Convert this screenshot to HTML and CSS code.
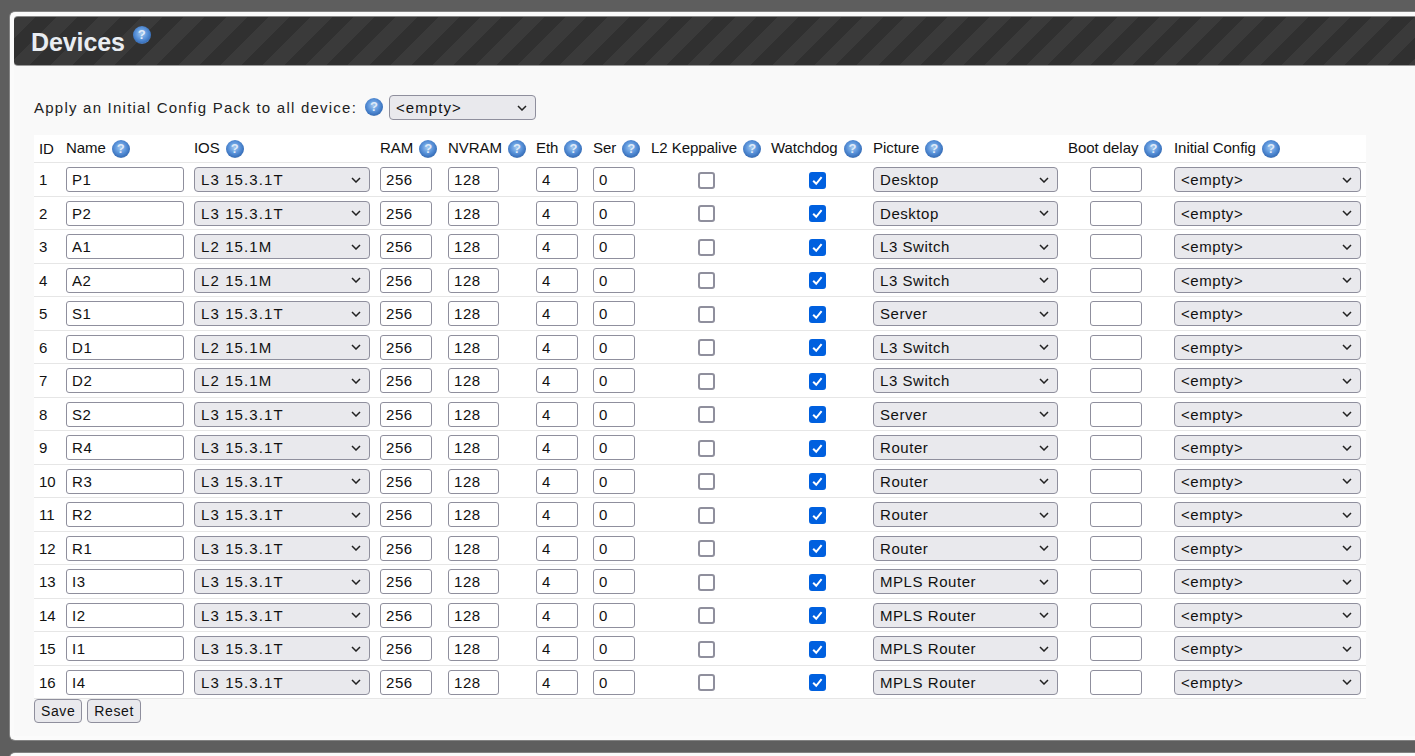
FILE: index.html
```html
<!DOCTYPE html>
<html lang="en">
<head>
<meta charset="utf-8">
<title>Devices</title>
<link rel="stylesheet" href="styles.css">
</head>
<body>
<section class="card">
  <header class="card-head"><h1>Devices</h1><span class="help help-title">?</span></header>
  <form class="card-body">
    <div class="pack"><label>Apply an Initial Config Pack to all device:</label><span class="help">?</span><select class="sel sel-pack"><option>&lt;empty&gt;</option></select></div>
    <table class="devices">
      <colgroup><col class="c-id"><col class="c-name"><col class="c-ios"><col class="c-ram"><col class="c-nvram"><col class="c-eth"><col class="c-ser"><col class="c-l2"><col class="c-wd"><col class="c-pic"><col class="c-boot"><col class="c-init"></colgroup>
      <thead><tr><th>ID</th><th>Name<span class="help">?</span></th><th>IOS<span class="help">?</span></th><th>RAM<span class="help">?</span></th><th>NVRAM<span class="help">?</span></th><th>Eth<span class="help">?</span></th><th>Ser<span class="help">?</span></th><th>L2 Keppalive<span class="help">?</span></th><th>Watchdog<span class="help">?</span></th><th>Picture<span class="help">?</span></th><th>Boot delay<span class="help">?</span></th><th>Initial Config<span class="help">?</span></th></tr></thead>
      <tbody>
        <tr><td>1</td><td><input class="in w-name" value="P1"></td><td><select class="sel w-ios"><option>L3 15.3.1T</option></select></td><td><input class="in w-ram" value="256"></td><td><input class="in w-nv" value="128"></td><td><input class="in w-port" value="4"></td><td><input class="in w-port" value="0"></td><td class="mid"><input type="checkbox" class="chk"></td><td class="mid"><input type="checkbox" class="chk" checked></td><td><select class="sel w-pic"><option>Desktop</option></select></td><td class="mid"><input class="in w-ram"></td><td><select class="sel w-init"><option>&lt;empty&gt;</option></select></td></tr>
        <tr><td>2</td><td><input class="in w-name" value="P2"></td><td><select class="sel w-ios"><option>L3 15.3.1T</option></select></td><td><input class="in w-ram" value="256"></td><td><input class="in w-nv" value="128"></td><td><input class="in w-port" value="4"></td><td><input class="in w-port" value="0"></td><td class="mid"><input type="checkbox" class="chk"></td><td class="mid"><input type="checkbox" class="chk" checked></td><td><select class="sel w-pic"><option>Desktop</option></select></td><td class="mid"><input class="in w-ram"></td><td><select class="sel w-init"><option>&lt;empty&gt;</option></select></td></tr>
        <tr><td>3</td><td><input class="in w-name" value="A1"></td><td><select class="sel w-ios"><option>L2 15.1M</option></select></td><td><input class="in w-ram" value="256"></td><td><input class="in w-nv" value="128"></td><td><input class="in w-port" value="4"></td><td><input class="in w-port" value="0"></td><td class="mid"><input type="checkbox" class="chk"></td><td class="mid"><input type="checkbox" class="chk" checked></td><td><select class="sel w-pic"><option>L3 Switch</option></select></td><td class="mid"><input class="in w-ram"></td><td><select class="sel w-init"><option>&lt;empty&gt;</option></select></td></tr>
        <tr><td>4</td><td><input class="in w-name" value="A2"></td><td><select class="sel w-ios"><option>L2 15.1M</option></select></td><td><input class="in w-ram" value="256"></td><td><input class="in w-nv" value="128"></td><td><input class="in w-port" value="4"></td><td><input class="in w-port" value="0"></td><td class="mid"><input type="checkbox" class="chk"></td><td class="mid"><input type="checkbox" class="chk" checked></td><td><select class="sel w-pic"><option>L3 Switch</option></select></td><td class="mid"><input class="in w-ram"></td><td><select class="sel w-init"><option>&lt;empty&gt;</option></select></td></tr>
        <tr><td>5</td><td><input class="in w-name" value="S1"></td><td><select class="sel w-ios"><option>L3 15.3.1T</option></select></td><td><input class="in w-ram" value="256"></td><td><input class="in w-nv" value="128"></td><td><input class="in w-port" value="4"></td><td><input class="in w-port" value="0"></td><td class="mid"><input type="checkbox" class="chk"></td><td class="mid"><input type="checkbox" class="chk" checked></td><td><select class="sel w-pic"><option>Server</option></select></td><td class="mid"><input class="in w-ram"></td><td><select class="sel w-init"><option>&lt;empty&gt;</option></select></td></tr>
        <tr><td>6</td><td><input class="in w-name" value="D1"></td><td><select class="sel w-ios"><option>L2 15.1M</option></select></td><td><input class="in w-ram" value="256"></td><td><input class="in w-nv" value="128"></td><td><input class="in w-port" value="4"></td><td><input class="in w-port" value="0"></td><td class="mid"><input type="checkbox" class="chk"></td><td class="mid"><input type="checkbox" class="chk" checked></td><td><select class="sel w-pic"><option>L3 Switch</option></select></td><td class="mid"><input class="in w-ram"></td><td><select class="sel w-init"><option>&lt;empty&gt;</option></select></td></tr>
        <tr><td>7</td><td><input class="in w-name" value="D2"></td><td><select class="sel w-ios"><option>L2 15.1M</option></select></td><td><input class="in w-ram" value="256"></td><td><input class="in w-nv" value="128"></td><td><input class="in w-port" value="4"></td><td><input class="in w-port" value="0"></td><td class="mid"><input type="checkbox" class="chk"></td><td class="mid"><input type="checkbox" class="chk" checked></td><td><select class="sel w-pic"><option>L3 Switch</option></select></td><td class="mid"><input class="in w-ram"></td><td><select class="sel w-init"><option>&lt;empty&gt;</option></select></td></tr>
        <tr><td>8</td><td><input class="in w-name" value="S2"></td><td><select class="sel w-ios"><option>L3 15.3.1T</option></select></td><td><input class="in w-ram" value="256"></td><td><input class="in w-nv" value="128"></td><td><input class="in w-port" value="4"></td><td><input class="in w-port" value="0"></td><td class="mid"><input type="checkbox" class="chk"></td><td class="mid"><input type="checkbox" class="chk" checked></td><td><select class="sel w-pic"><option>Server</option></select></td><td class="mid"><input class="in w-ram"></td><td><select class="sel w-init"><option>&lt;empty&gt;</option></select></td></tr>
        <tr><td>9</td><td><input class="in w-name" value="R4"></td><td><select class="sel w-ios"><option>L3 15.3.1T</option></select></td><td><input class="in w-ram" value="256"></td><td><input class="in w-nv" value="128"></td><td><input class="in w-port" value="4"></td><td><input class="in w-port" value="0"></td><td class="mid"><input type="checkbox" class="chk"></td><td class="mid"><input type="checkbox" class="chk" checked></td><td><select class="sel w-pic"><option>Router</option></select></td><td class="mid"><input class="in w-ram"></td><td><select class="sel w-init"><option>&lt;empty&gt;</option></select></td></tr>
        <tr><td>10</td><td><input class="in w-name" value="R3"></td><td><select class="sel w-ios"><option>L3 15.3.1T</option></select></td><td><input class="in w-ram" value="256"></td><td><input class="in w-nv" value="128"></td><td><input class="in w-port" value="4"></td><td><input class="in w-port" value="0"></td><td class="mid"><input type="checkbox" class="chk"></td><td class="mid"><input type="checkbox" class="chk" checked></td><td><select class="sel w-pic"><option>Router</option></select></td><td class="mid"><input class="in w-ram"></td><td><select class="sel w-init"><option>&lt;empty&gt;</option></select></td></tr>
        <tr><td>11</td><td><input class="in w-name" value="R2"></td><td><select class="sel w-ios"><option>L3 15.3.1T</option></select></td><td><input class="in w-ram" value="256"></td><td><input class="in w-nv" value="128"></td><td><input class="in w-port" value="4"></td><td><input class="in w-port" value="0"></td><td class="mid"><input type="checkbox" class="chk"></td><td class="mid"><input type="checkbox" class="chk" checked></td><td><select class="sel w-pic"><option>Router</option></select></td><td class="mid"><input class="in w-ram"></td><td><select class="sel w-init"><option>&lt;empty&gt;</option></select></td></tr>
        <tr><td>12</td><td><input class="in w-name" value="R1"></td><td><select class="sel w-ios"><option>L3 15.3.1T</option></select></td><td><input class="in w-ram" value="256"></td><td><input class="in w-nv" value="128"></td><td><input class="in w-port" value="4"></td><td><input class="in w-port" value="0"></td><td class="mid"><input type="checkbox" class="chk"></td><td class="mid"><input type="checkbox" class="chk" checked></td><td><select class="sel w-pic"><option>Router</option></select></td><td class="mid"><input class="in w-ram"></td><td><select class="sel w-init"><option>&lt;empty&gt;</option></select></td></tr>
        <tr><td>13</td><td><input class="in w-name" value="I3"></td><td><select class="sel w-ios"><option>L3 15.3.1T</option></select></td><td><input class="in w-ram" value="256"></td><td><input class="in w-nv" value="128"></td><td><input class="in w-port" value="4"></td><td><input class="in w-port" value="0"></td><td class="mid"><input type="checkbox" class="chk"></td><td class="mid"><input type="checkbox" class="chk" checked></td><td><select class="sel w-pic"><option>MPLS Router</option></select></td><td class="mid"><input class="in w-ram"></td><td><select class="sel w-init"><option>&lt;empty&gt;</option></select></td></tr>
        <tr><td>14</td><td><input class="in w-name" value="I2"></td><td><select class="sel w-ios"><option>L3 15.3.1T</option></select></td><td><input class="in w-ram" value="256"></td><td><input class="in w-nv" value="128"></td><td><input class="in w-port" value="4"></td><td><input class="in w-port" value="0"></td><td class="mid"><input type="checkbox" class="chk"></td><td class="mid"><input type="checkbox" class="chk" checked></td><td><select class="sel w-pic"><option>MPLS Router</option></select></td><td class="mid"><input class="in w-ram"></td><td><select class="sel w-init"><option>&lt;empty&gt;</option></select></td></tr>
        <tr><td>15</td><td><input class="in w-name" value="I1"></td><td><select class="sel w-ios"><option>L3 15.3.1T</option></select></td><td><input class="in w-ram" value="256"></td><td><input class="in w-nv" value="128"></td><td><input class="in w-port" value="4"></td><td><input class="in w-port" value="0"></td><td class="mid"><input type="checkbox" class="chk"></td><td class="mid"><input type="checkbox" class="chk" checked></td><td><select class="sel w-pic"><option>MPLS Router</option></select></td><td class="mid"><input class="in w-ram"></td><td><select class="sel w-init"><option>&lt;empty&gt;</option></select></td></tr>
        <tr><td>16</td><td><input class="in w-name" value="I4"></td><td><select class="sel w-ios"><option>L3 15.3.1T</option></select></td><td><input class="in w-ram" value="256"></td><td><input class="in w-nv" value="128"></td><td><input class="in w-port" value="4"></td><td><input class="in w-port" value="0"></td><td class="mid"><input type="checkbox" class="chk"></td><td class="mid"><input type="checkbox" class="chk" checked></td><td><select class="sel w-pic"><option>MPLS Router</option></select></td><td class="mid"><input class="in w-ram"></td><td><select class="sel w-init"><option>&lt;empty&gt;</option></select></td></tr>
      </tbody>
    </table>
    <div class="actions"><button type="button" class="btn">Save</button><button type="button" class="btn">Reset</button></div>
  </form>
</section>
<section class="card card-next"></section>
</body>
</html>
```
FILE: styles.css
```css
* { box-sizing: border-box; }
html, body { margin: 0; height: 100%; overflow: hidden; }
body {
  background: #5e5e5e;
  font-family: "Liberation Sans", Arial, sans-serif;
  font-size: 14px;
  color: #111;
  padding: 12px 0 0 10px;
}
.card {
  width: 1420px;
  background: #f9f9f9;
  border: 4px solid #fbfbfb;
  border-right: 0;
  border-radius: 5px 0 0 5px;
  box-shadow: 0 0 0 1px rgba(200,200,200,.35);
  height: 728px;
}
.card-next { height: 40px; margin-top: 13px; background: #fff; }
.card-head {
  height: 50px;
  display: flex;
  align-items: flex-start;
  padding: 9px 0 0 17px;
  border-radius: 4px 0 0 4px;
  background: repeating-linear-gradient(135deg, #3a3a3a 0 15px, #303030 15px 30px);
  border-top: 1px solid #888;
  border-bottom: 1px solid #999;
}
.card-head h1 {
  margin: 0;
  font-size: 25px;
  line-height: 32px;
  font-weight: bold;
  letter-spacing: -.1px;
  color: #e9edf2;
}
.help {
  display: inline-block;
  width: 18px;
  height: 18px;
  margin-left: 6px;
  border-radius: 50%;
  background: radial-gradient(circle at 47% 42%, #a4c8ee 0, #5d96dc 38%, #3a72bd 66%, #8e99a6 88%, #c4c8cd 100%);
  color: #dfeaf8;
  font: bold 13px/18px "Liberation Sans", Arial, sans-serif;
  text-align: center;
  letter-spacing: 0;
  vertical-align: middle;
}
.help-title { margin: 0 0 0 8px; }
.card-body { padding: 29px 0 0 20px; }
.pack {
  display: flex;
  align-items: center;
  height: 25px;
  font-size: 15px;
  letter-spacing: 1.23px;
  color: #222;
  margin-bottom: 15px;
}
.pack .help { margin: -2px 6px 0 8px; }
.sel {
  appearance: none;
  height: 25px;
  padding: 0 22px 0 6px;
  background: #e9e9ed url("data:image/svg+xml,%3Csvg xmlns='http://www.w3.org/2000/svg' width='10' height='6' viewBox='0 0 10 6'%3E%3Cpath d='M1 1l4 4 4-4' fill='none' stroke='%23222' stroke-width='1.5'/%3E%3C/svg%3E") no-repeat right 8px center;
  border: 1px solid #8f8f9d;
  border-radius: 4px;
  font: 15px "Liberation Sans", Arial, sans-serif;
  letter-spacing: .55px;
  color: #111;
  display: block;
}
.sel-pack { width: 147px; letter-spacing: 1.05px; }
.devices {
  table-layout: fixed;
  width: 1332px;
  border-collapse: collapse;
  background: #fff;
}
.c-id { width: 27px; } .c-name { width: 128px; } .c-ios { width: 186px; } .c-ram { width: 68px; }
.c-nvram { width: 88px; } .c-eth { width: 57px; } .c-ser { width: 58px; } .c-l2 { width: 120px; }
.c-wd { width: 102px; } .c-pic { width: 195px; } .c-boot { width: 106px; } .c-init { width: 197px; }
.devices th {
  height: 27.75px;
  padding: 0 0 1px 5px;
  text-align: left;
  font-size: 15px;
  font-weight: normal;
  letter-spacing: -.05px;
  white-space: nowrap;
  border-bottom: 1px solid #e6e6e6;
}
.devices td {
  height: 33.5px;
  padding: 0 5px;
  border-bottom: 1px solid #e6e6e6;
  font-size: 15px;
}
.devices td.mid { text-align: center; }
.in {
  height: 25px;
  padding: 0 5px;
  border: 1px solid #8f8f9d;
  border-radius: 3px;
  background: #fff;
  font: 15px "Liberation Sans", Arial, sans-serif;
  letter-spacing: .55px;
  color: #111;
  display: block;
}
.mid .in { display: inline-block; vertical-align: middle; }
.w-name { width: 118px; } .w-ios { width: 176px; letter-spacing: 1.1px; } .w-ram { width: 52px; } .w-nv { width: 51px; }
.w-port { width: 42px; } .w-pic { width: 185px; } .w-init { width: 187px; }
.chk {
  appearance: none;
  width: 17px;
  height: 17px;
  margin: 0;
  vertical-align: middle;
  border: 2px solid #8f8f9d;
  border-radius: 3px;
  background: #fff;
}
.chk:checked {
  border-color: #0060df;
  background: #0060df url("data:image/svg+xml,%3Csvg xmlns='http://www.w3.org/2000/svg' width='13' height='13' viewBox='0 0 13 13'%3E%3Cpath d='M2.2 6.8l3 3 5.4-6.6' fill='none' stroke='%23fff' stroke-width='2'/%3E%3C/svg%3E") no-repeat center;
}
.actions { display: flex; gap: 5px; }
.btn {
  height: 24px;
  padding: 0 6px;
  background: #e9e9ed;
  border: 1px solid #8f8f9d;
  border-radius: 4px;
  font: 14px "Liberation Sans", Arial, sans-serif;
  letter-spacing: .6px;
  color: #111;
}
```
